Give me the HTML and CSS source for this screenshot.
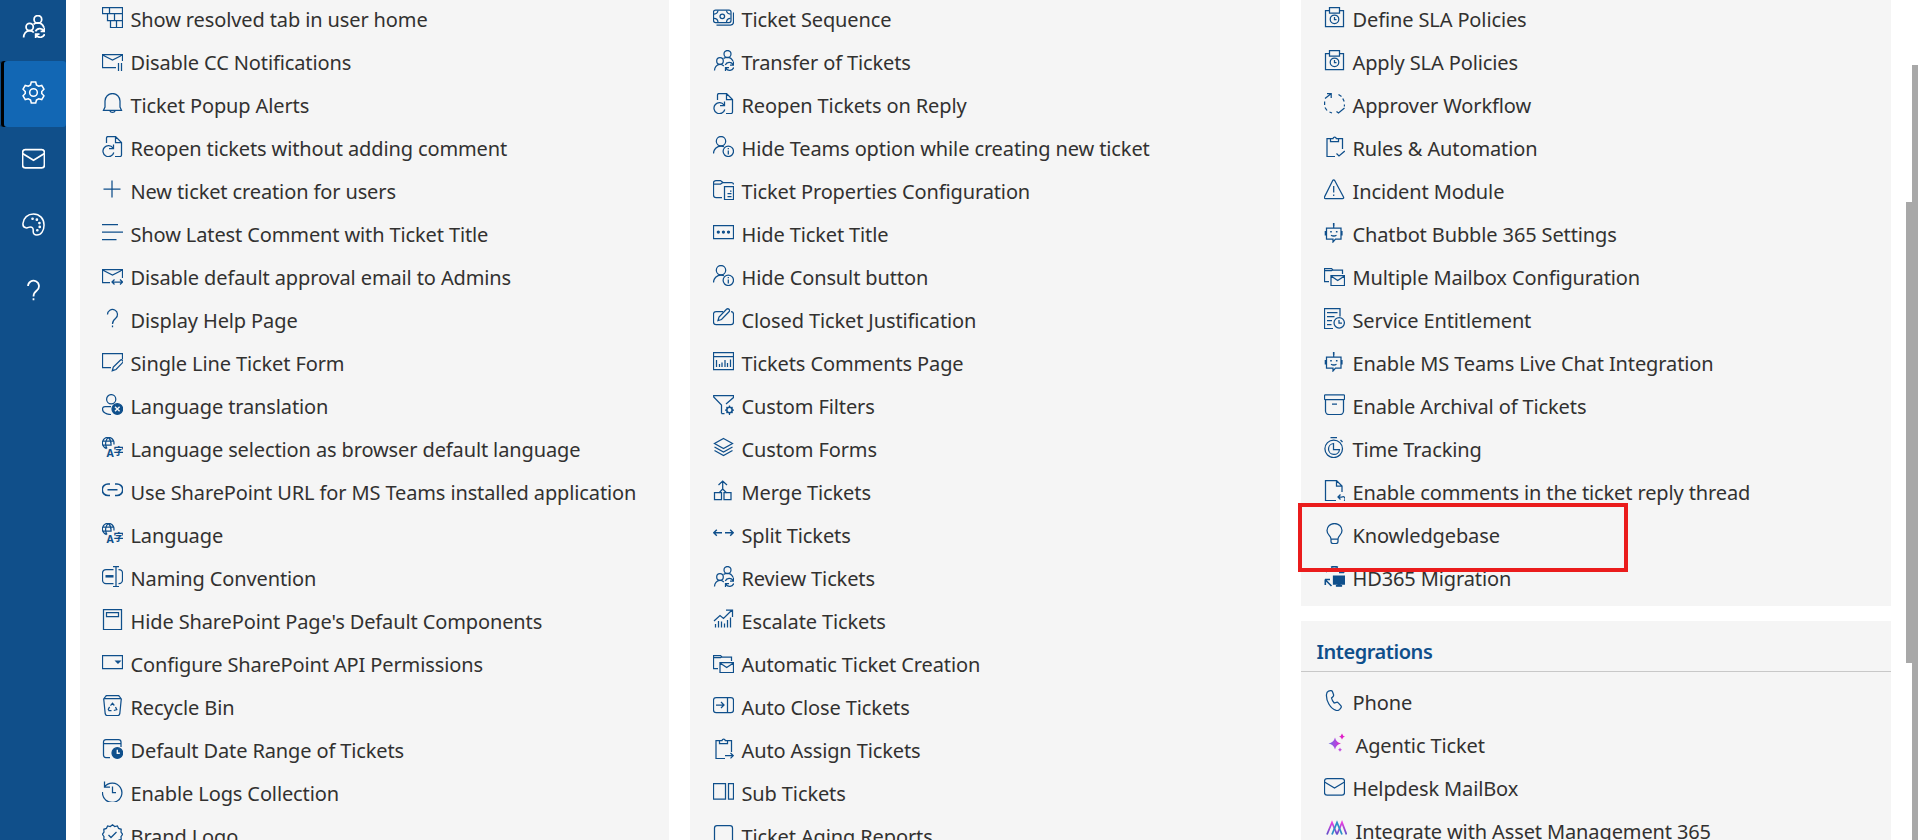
FILE: index.html
```html
<!DOCTYPE html>
<html lang="en">
<head>
<meta charset="utf-8">
<title>Settings</title>
<link rel="stylesheet" href="styles.css">
</head>
<body>
<svg class="sprite" aria-hidden="true">
<defs>
<linearGradient id="g-ai" x1="0" x2="1" y1="0" y2="0"><stop offset="0" stop-color="#6a6be0"/><stop offset=".6" stop-color="#b046e0"/><stop offset="1" stop-color="#e81ec0"/></linearGradient>
<linearGradient id="g-am" x1="0" x2="0" y1="0" y2="1"><stop offset="0" stop-color="#ea3fe0"/><stop offset="1" stop-color="#5b50c8"/></linearGradient>
</defs>
<symbol id="bricks" viewBox="0 0 21 21"><path d="M.5 .5h20v20h-12v-7h-3v-7h-5zM.5 6.5h20M5.500 13.500h15M7.500 .5v6M12.500 6.500v7M14.500 13.500v7"/></symbol>
<symbol id="mailpause" viewBox="0 0 21 21"><path d="M14 17.500H.5v-13h20V11M.5 5l10 5 10-5M16.500 13v8M19.500 13v8"/></symbol>
<symbol id="bell" viewBox="0 0 21 21"><path d="M1.500 17.300L3 14V8a7.500 7.500 0 0 1 15 0v6l1.500 3.300zM7.700 17.500a3 3 0 0 0 5.600 0"/></symbol>
<symbol id="reopen" viewBox="0 0 21 21"><path d="M4.500 7V2a1.500 1.500 0 0 1 1.500-1.500h7.500l6 6V19a1.500 1.500 0 0 1-1.500 1.500h-5M13.500 .5v6h6M11 12a5.500 5.500 0 1 0 .8 4.500M11.500 8.500v4h-4.500"/></symbol>
<symbol id="plus" viewBox="0 0 21 21"><path d="M1.500 10h17M10 1.500v17"/></symbol>
<symbol id="lines" viewBox="0 0 21 21"><path d="M0 2.500h16M0 10h21M0 17.500h14.500"/></symbol>
<symbol id="mailarrows" viewBox="0 0 21 21"><path d="M8 17.500H.5v-13h20V13M.5 5l10 5 10-5M10 17h10.500M12.500 14.500L10 17l2.500 2.500M18 14.500l2.500 2.500-2.500 2.500"/></symbol>
<symbol id="help" viewBox="0 0 21 21"><path d="M5.500 6.500a5 5 0 1 1 8 4c-2 1.500-3 2.500-3 5.500M10.500 17.500v1.800"/></symbol>
<symbol id="formpen" viewBox="0 0 21 21"><path d="M9 16.500H.5v-14h20V8M10.300 19.700l1-3.700 7-6.700a1.600 1.600 0 0 1 2.300 2.300L14 18.500z"/></symbol>
<symbol id="userx" viewBox="0 0 21 21"><circle cx="9.200" cy="5.200" r="4.600"/><path d="M9 12.500H3A2.500 2.500 0 0 0 .5 15c0 3.500 4 5.500 8.500 5.500"/><circle class="solid" cx="15.300" cy="15" r="5.300"/><path class="knock" d="M13 12.700l4.600 4.600M17.600 12.700L13 17.300"/></symbol>
<symbol id="lang" viewBox="0 0 21 21"><path d="M11.800 7.500A5.800 5.800 0 1 0 4.500 11.600M6.200 .5C3 3 3 8.500 5 11.500M6.200 .5c2.300 1.700 3 4 2.800 7M1 4h10.500M.7 8h9"/><text x="4.500" y="19.800" font-size="10.500" font-weight="bold" class="glyph">A</text><text x="11.500" y="17.500" font-size="10.500" class="glyph cjk">字</text></symbol>
<symbol id="link" viewBox="0 0 21 21"><path class="w15" d="M8 4H6a5.300 5.300 0 0 0 0 11.500h2M13 4h2a5.300 5.300 0 0 1 0 11.500h-2M5.500 9.700h10"/></symbol>
<symbol id="rename" viewBox="0 0 21 21"><path d="M11.500 3.500H4a3.500 3.500 0 0 0-3.500 3.500v7a3.500 3.500 0 0 0 3.500 3.500h7.500M16.500 3.500h.5a3.500 3.500 0 0 1 3.500 3.500v7a3.500 3.500 0 0 1-3.500 3.500h-.5M14 .5v20M11 .5h6M11 20.500h6"/><path class="w25" d="M3.500 10.300h8"/></symbol>
<symbol id="pagehead" viewBox="0 0 21 21"><path d="M1.500 .5h18v20h-18zM4.500 3.500h12v4h-12z"/></symbol>
<symbol id="dropdown" viewBox="0 0 21 21"><path d="M.5 3.500h20v13H.5z"/><path class="solid" d="M14 9.200h4l-2 2z"/></symbol>
<symbol id="recycle" viewBox="0 0 21 21"><path d="M2 3.700L3.500 1.500Q4 .5 5 .5h11q1 0 1.500 1L19 3.700zM1.700 3.700l1.500 15q.3 1.800 2 1.800h10.600q1.700 0 2-1.800l1.500-15M8.500 10.700l2-2.500 1.800 2.300M13.500 12l1.300 2.700-3 .8M9.500 15.500H7l-.7-1.300 1.300-2.300"/></symbol>
<symbol id="calclock" viewBox="0 0 21 21"><path d="M8 19.500H4A2.500 2.500 0 0 1 1.500 17V4A2.500 2.500 0 0 1 4 1.500h12.500A2.500 2.500 0 0 1 19 4v5M1.500 5.500H19"/><circle class="solid" cx="15.300" cy="15" r="5.300"/><path class="knock" d="M15.300 11.700v3.500h2.500"/></symbol>
<symbol id="history" viewBox="0 0 21 21"><path d="M2.500 5.800a9.700 9.700 0 1 1-2 5.200M2.500 .5v5.500H8M10.500 5.500v6H14"/></symbol>
<symbol id="badge" viewBox="0 0 21 21"><path d="M10.500 .8l2.200 1.700 2.700-.6 1.200 2.500 2.600.9-.2 2.800 1.600 2.200-1.600 2.300.2 2.700-2.600 1-1.200 2.400-2.700-.5-2.200 1.700-2.200-1.700-2.700.5-1.200-2.400-2.600-1 .2-2.700L.4 10.300 2 8.100l-.2-2.800 2.600-.9 1.200-2.500 2.700.6zM6.500 11l2.500 2.500 5.500-5.500"/></symbol>
<symbol id="money" viewBox="0 0 21 21"><rect x=".5" y="3" width="17.500" height="12.500" rx="2"/><circle cx="9.300" cy="9.300" r="2.300"/><path d="M5 3.500a4 4 0 0 1-4 3.500M13.500 3.500a4 4 0 0 0 4 3.500M1 11.500a4 4 0 0 1 4 3.500M17.500 11.500a4 4 0 0 0-4 3.500M20.500 5.500V15q0 3-3 3H3.500"/></symbol>
<symbol id="people" viewBox="0 0 21 21"><circle cx="14.500" cy="4" r="3.500"/><circle cx="7" cy="11" r="3.300"/><path d="M1.500 20.500c0-3 2-6.200 5.500-6.200 1.800 0 3 .8 3.800 1.700M10.500 8.500c1-.8 2.500-1.200 4-1.200 2.700 0 4.500 1.500 5.500 4M12.300 15a4.300 4.300 0 0 1 7.700-.5M20.500 11.500v3.500H17M20.700 17.500a4.300 4.300 0 0 1-7.700 .8M12.500 21v-3.500H16"/></symbol>
<symbol id="userinfo" viewBox="0 0 21 21"><circle cx="8" cy="5.200" r="4.700"/><path d="M.5 17.500C.5 13.500 3.800 10 8 10q1.500 0 3 .7"/><circle cx="15.300" cy="15.300" r="5.200"/><path d="M15.300 14.500v4M15.300 12v1.300"/></symbol>
<symbol id="folderdoc" viewBox="0 0 21 21"><path d="M9 18.500H3A2.500 2.500 0 0 1 .5 16V4A2.500 2.500 0 0 1 3 1.500h4.500l2.500 2h8.500q2 0 2 2M.5 5h7l2.500-1.500M11.500 7.500h9v13h-9zM17 12h1.500M14.500 14.500h4M14.500 17.500h4"/></symbol>
<symbol id="dots" viewBox="0 0 21 21"><path d="M.5 3.500h20v13H.5z"/><circle class="solid" cx="5.300" cy="10" r="1"/><circle class="solid" cx="10.400" cy="10" r="1"/><circle class="solid" cx="15.500" cy="10" r="1"/></symbol>
<symbol id="compose" viewBox="0 0 21 21"><path d="M10 3.500H3A2.500 2.500 0 0 0 .5 6v8A2.500 2.500 0 0 0 3 16.500h15a2.500 2.500 0 0 0 2.500-2.500V6A2.500 2.500 0 0 0 18 3.500M5 12.500l1-3.500 7.500-7.700a1.700 1.700 0 0 1 2.500 2.500L8.500 11.500z"/></symbol>
<symbol id="chartpage" viewBox="0 0 21 21"><path d="M.5 1.500h20v17H.5zM.5 5.500h20M3.500 9v7M6.500 13v3M9 11.500v4.500M12 9v7M14.500 12v4M17.500 8.500v7.500"/></symbol>
<symbol id="filter" viewBox="0 0 21 21"><path d="M8.500 19.500V11L.7 3V1.500h19.800v2L13 10M8.500 19.500h3"/><circle class="w15" cx="16.500" cy="16" r="2.700"/><path d="M16.500 11.500v1.500M16.500 19v2M12 16h1.500M19.500 16H21M13.500 13l1 1M18.500 18l1 1M13.500 19l1-1M18.500 14l1-1"/></symbol>
<symbol id="layers" viewBox="0 0 21 21"><path d="M10.500 1.500L19.500 6.500l-9 5-9-5zM1.500 10l9 5 9-5M1.500 13.500l9 5 9-5"/></symbol>
<symbol id="merge" viewBox="0 0 21 21"><path d="M9.700 1v8L6 13M9.700 9l4 4M5.500 5l4.200-4L14 5M1.500 12.500h7v7h-7zM11 12.500h7v7h-7z"/></symbol>
<symbol id="split" viewBox="0 0 21 21"><path class="w12" d="M.8 9.700H9M3.800 6.700l-3 3 3 3M12 9.700h8.200M17.200 6.700l3 3-3 3"/></symbol>
<symbol id="trend" viewBox="0 0 21 21"><path d="M1 12l6-5.500 3.500 3L19 1M13 1.200h6.500V8M2.500 18.500V15M5.500 18.500V12M8.500 18.500V12.500M11.500 18.500V14.500M14.500 18.500V11M17.500 18.500V8.500"/></symbol>
<symbol id="foldermail" viewBox="0 0 21 21"><path d="M5 16.500H.5v-13h7l1.500 1.500h9.500V9M.5 5.500h7L9 5M7 10.500h13.500v10H7zM7 11l6.700 4.500 6.800-4.500"/></symbol>
<symbol id="panelin" viewBox="0 0 21 21"><rect x=".5" y="2.500" width="20" height="15" rx="2.500"/><path d="M14.500 2.500v15M3 10h8M8 7l3 3-3 3"/></symbol>
<symbol id="clipnext" viewBox="0 0 21 21"><path d="M12 20.500H3v-18h3.500M14 2.500h4.500V14M6.500 5.500v-3H9a1.700 1.700 0 0 1 3.300 0h2.200v3zM12 17.700h8M17.500 15l2.700 2.700-2.700 2.700"/></symbol>
<symbol id="split2" viewBox="0 0 21 21"><path d="M.5 2.500h12v15.500H.5zM15.500 2.500h5v15.500h-5z"/></symbol>
<symbol id="sheet" viewBox="0 0 21 21"><rect x="1.500" y="1.500" width="18" height="19" rx="2.500"/></symbol>
<symbol id="sla" viewBox="0 0 21 21"><path d="M5 3.500H1.500v16h18v-16H16M5.500 .5h10v5.500h-10z"/><circle cx="10.500" cy="12.300" r="4.300"/><path d="M10.500 10v2.500h2"/></symbol>
<symbol id="cycle" viewBox="0 0 21 21"><path d="M1 5.500L7 .7M3 .7h4.200V5M.6 8.500v3.500M1 14.500l2 3M5.500 19l2.500 1M14.500 1.500l3 2M18.800 5.500l1.400 3M20.400 11.500v2M12.500 18.500l2 1.500 6-5"/></symbol>
<symbol id="clipcheck" viewBox="0 0 21 21"><path d="M11 20.500H3v-18h3.500M14 2.500h4.500V13M6.500 5.500v-3H9a1.700 1.700 0 0 1 3.300 0h2.200v3zM12.500 17.500l2.500 2.500 5.800-5"/></symbol>
<symbol id="warn" viewBox="0 0 21 21"><path d="M8.700 1.500q1-1.300 2 0l8.800 16.500q.6 1.500-1 1.500H1.500q-1.600 0-1-1.500zM9.700 7v6.500M9.700 15.500v1.500"/></symbol>
<symbol id="bot" viewBox="0 0 21 21"><path d="M9.700 3v2.500M2.500 6h14.500v11h-5.500l-2.500 3v-3H2.500zM7 13.200q2.800 1.600 5.500 0"/><path class="w15" d="M9.700 1v2.500M1.500 9v4.500M17.800 9v4.500M7 9v1.500M12.700 9v1.500"/></symbol>
<symbol id="docclock" viewBox="0 0 21 21"><path d="M9 20.500H.5V.5h15.500v8M3 4.500h10.500M3 8.500h7.500M3 12.500h5M3 16.500h4.500"/><circle cx="15.200" cy="14.800" r="5.200"/><path d="M15 12v3h3"/></symbol>
<symbol id="archive" viewBox="0 0 21 21"><rect x=".5" y=".8" width="20" height="4.700" rx=".8"/><path d="M1.500 5.500V17A3.500 3.500 0 0 0 5 20.500h11a3.500 3.500 0 0 0 3.500-3.500V5.500M8 10h5"/></symbol>
<symbol id="timer" viewBox="0 0 21 21"><circle cx="9.700" cy="11.800" r="8.800"/><path d="M6.500 .7h6.500M16.500 3l2 2M9.500 6.500a5.500 5.500 0 1 0 6 6h-6z"/></symbol>
<symbol id="docreply" viewBox="0 0 21 21"><path d="M12 20.500H1.500V.5h11l5.500 5.500v6M12.500 .5V6H18M14 17h4a2 2 0 0 1 2 3.700M16.500 14.500L14 17l2.500 2.500"/></symbol>
<symbol id="bulb" viewBox="0 0 21 21"><path d="M7 16C7 12.500 3 12 3 7.500a7.500 7 0 0 1 15 0C18 12 14 12.500 14 16zM7 16v2.500q0 2 2 2h3q2 0 2-2V16"/></symbol>
<symbol id="migrate" viewBox="0 0 21 21"><path class="w15" d="M7 1.200Q10 0 14 1.200M2 6l1.500-1.500M15 6.500h5M20 6.500v-2.500M1 13.500h5M1.300 13.500V19M1.500 14l6 6"/><path class="solid" d="M9.500 10h11v8h-11zM12.500 19.500h5v.7h-5zM14 18h2v2h-2z"/></symbol>
<symbol id="phone" viewBox="0 0 21 21"><path d="M4.500 1.200L6.500 .7q1.500-.3 2 1l1 2.800q.4 1.300-.6 2.200L7.500 8q.5 2.500 2.700 5l2.300-.7q1.100-.3 1.800.6l2.700 3q.7 1-.1 2l-1.200 1.500q-1.400 1.500-3.500 1C6 18.500 2 10.500 2.500 4.500q.1-2.600 2-3.300z"/></symbol>
<symbol id="mail" viewBox="0 0 21 21"><rect x=".5" y="2.500" width="20" height="16.500" rx="2.500"/><path d="M.5 6l10 6 10-6"/></symbol>
<symbol id="sparkle" viewBox="0 0 21 21"><g fill="url(#g-ai)" stroke="none"><path d="M9 4.500q1.200 5 6 6-4.800 1-6 6-1.200-5-6.500-6 5.300-1 6.500-6z"/><path d="M16 .5q.7 2.500 3 3-2.300.5-3 3-.7-2.500-3-3 2.300-.5 3-3z" fill="#e020c8"/><path d="M14 14.500q.5 1.700 2 2.200-1.500.4-2 2-.5-1.600-2-2 1.500-.5 2-2.200z" fill="#c24ae0"/></g></symbol>
<symbol id="asset" viewBox="0 0 21 21"><g fill="none" stroke-width="1.800"><path stroke="url(#g-am)" d="M1 15.500L6 3.500l5 12M11 15.500l5-12 4.500 12"/><path stroke="#2c8fc8" d="M6 15.500l5-12 5 12"/></g></symbol>
<symbol id="gear" viewBox="0 0 24 24"><circle cx="12" cy="12" r="4"/><path d="M9.700 1h4.600l.8 3.200 2.300 1.300 3.200-.9 2.300 4-2.300 2.300v2.200l2.300 2.300-2.300 4-3.200-.9-2.300 1.300-.8 3.200H9.700l-.8-3.200-2.300-1.300-3.200.9-2.300-4 2.300-2.300v-2.200L1.100 8.600l2.300-4 3.200.9 2.300-1.300z"/></symbol>
<symbol id="palette" viewBox="0 0 24 24"><path d="M1 11C1.500 5 6 1 12 1c6.500 0 11 5 11 11.500C23 18.500 20 23 15.500 23c-2.500 0-4-1.500-3.800-4.200.2-3-.9-4.300-3.200-4.300-1.500 0-2.500 1.500-4.500 1-2.200-.5-3.200-2-3-4.500z"/><g class="solid"><circle cx="11" cy="6" r=".6"/><circle cx="15.500" cy="7" r=".6"/><circle cx="18.200" cy="10.500" r=".6"/><circle cx="18.500" cy="14.500" r=".6"/><circle cx="16" cy="18" r=".6"/></g></symbol>
</svg>

<div class="app">
<nav class="rail">
<a class="rail-item"><svg><use href="#people"/></svg></a>
<a class="rail-item active"><svg><use href="#gear"/></svg></a>
<a class="rail-item"><svg><use href="#mail"/></svg></a>
<a class="rail-item"><svg><use href="#palette"/></svg></a>
<a class="rail-item"><svg><use href="#help"/></svg></a>
</nav>

<main class="columns">
<section class="card first">
<ul class="list">
<li><svg><use href="#bricks"/></svg><span>Show resolved tab in user home</span></li>
<li><svg><use href="#mailpause"/></svg><span>Disable CC Notifications</span></li>
<li><svg><use href="#bell"/></svg><span>Ticket Popup Alerts</span></li>
<li><svg><use href="#reopen"/></svg><span>Reopen tickets without adding comment</span></li>
<li><svg><use href="#plus"/></svg><span>New ticket creation for users</span></li>
<li><svg><use href="#lines"/></svg><span>Show Latest Comment with Ticket Title</span></li>
<li><svg><use href="#mailarrows"/></svg><span>Disable default approval email to Admins</span></li>
<li><svg><use href="#help"/></svg><span>Display Help Page</span></li>
<li><svg><use href="#formpen"/></svg><span>Single Line Ticket Form</span></li>
<li><svg><use href="#userx"/></svg><span>Language translation</span></li>
<li><svg><use href="#lang"/></svg><span>Language selection as browser default language</span></li>
<li><svg><use href="#link"/></svg><span>Use SharePoint URL for MS Teams installed application</span></li>
<li><svg><use href="#lang"/></svg><span>Language</span></li>
<li><svg><use href="#rename"/></svg><span>Naming Convention</span></li>
<li><svg><use href="#pagehead"/></svg><span>Hide SharePoint Page's Default Components</span></li>
<li><svg><use href="#dropdown"/></svg><span>Configure SharePoint API Permissions</span></li>
<li><svg><use href="#recycle"/></svg><span>Recycle Bin</span></li>
<li><svg><use href="#calclock"/></svg><span>Default Date Range of Tickets</span></li>
<li><svg><use href="#history"/></svg><span>Enable Logs Collection</span></li>
<li><svg><use href="#badge"/></svg><span>Brand Logo</span></li>
</ul>
</section>

<section class="card">
<ul class="list">
<li><svg><use href="#money"/></svg><span>Ticket Sequence</span></li>
<li><svg><use href="#people"/></svg><span>Transfer of Tickets</span></li>
<li><svg><use href="#reopen"/></svg><span>Reopen Tickets on Reply</span></li>
<li><svg><use href="#userinfo"/></svg><span>Hide Teams option while creating new ticket</span></li>
<li><svg><use href="#folderdoc"/></svg><span>Ticket Properties Configuration</span></li>
<li><svg><use href="#dots"/></svg><span>Hide Ticket Title</span></li>
<li><svg><use href="#userinfo"/></svg><span>Hide Consult button</span></li>
<li><svg><use href="#compose"/></svg><span>Closed Ticket Justification</span></li>
<li><svg><use href="#chartpage"/></svg><span>Tickets Comments Page</span></li>
<li><svg><use href="#filter"/></svg><span>Custom Filters</span></li>
<li><svg><use href="#layers"/></svg><span>Custom Forms</span></li>
<li><svg><use href="#merge"/></svg><span>Merge Tickets</span></li>
<li><svg><use href="#split"/></svg><span>Split Tickets</span></li>
<li><svg><use href="#people"/></svg><span>Review Tickets</span></li>
<li><svg><use href="#trend"/></svg><span>Escalate Tickets</span></li>
<li><svg><use href="#foldermail"/></svg><span>Automatic Ticket Creation</span></li>
<li><svg><use href="#panelin"/></svg><span>Auto Close Tickets</span></li>
<li><svg><use href="#clipnext"/></svg><span>Auto Assign Tickets</span></li>
<li><svg><use href="#split2"/></svg><span>Sub Tickets</span></li>
<li><svg><use href="#sheet"/></svg><span>Ticket Aging Reports</span></li>
</ul>
</section>

<div class="stack">
<section class="card">
<ul class="list">
<li><svg><use href="#sla"/></svg><span>Define SLA Policies</span></li>
<li><svg><use href="#sla"/></svg><span>Apply SLA Policies</span></li>
<li><svg><use href="#cycle"/></svg><span>Approver Workflow</span></li>
<li><svg><use href="#clipcheck"/></svg><span>Rules &amp; Automation</span></li>
<li><svg><use href="#warn"/></svg><span>Incident Module</span></li>
<li><svg><use href="#bot"/></svg><span>Chatbot Bubble 365 Settings</span></li>
<li><svg><use href="#foldermail"/></svg><span>Multiple Mailbox Configuration</span></li>
<li><svg><use href="#docclock"/></svg><span>Service Entitlement</span></li>
<li><svg><use href="#bot"/></svg><span>Enable MS Teams Live Chat Integration</span></li>
<li><svg><use href="#archive"/></svg><span>Enable Archival of Tickets</span></li>
<li><svg><use href="#timer"/></svg><span>Time Tracking</span></li>
<li><svg><use href="#docreply"/></svg><span>Enable comments in the ticket reply thread</span></li>
<li class="marked"><svg><use href="#bulb"/></svg><span>Knowledgebase</span></li>
<li><svg><use href="#migrate"/></svg><span>HD365 Migration</span></li>
</ul>
</section>
<section class="card integrations">
<h2>Integrations</h2>
<ul class="list">
<li><svg><use href="#phone"/></svg><span>Phone</span></li>
<li class="wide"><svg><use href="#sparkle"/></svg><span>Agentic Ticket</span></li>
<li><svg><use href="#mail"/></svg><span>Helpdesk MailBox</span></li>
<li class="wide"><svg><use href="#asset"/></svg><span>Integrate with Asset Management 365</span></li>
</ul>
</section>
</div>
</main>

<div class="track inner"><i></i></div>
<div class="track outer"><i></i></div>
</div>
</body>
</html>
```
FILE: styles.css
```css
*, *::after { box-sizing: border-box; }
html, body { margin: 0; height: 100%; overflow: hidden; }
body {
  background: #fff;
  color: #323130;
  font: 20px/27px "Noto Sans", "Segoe UI", sans-serif;
}
.sprite { position: absolute; width: 0; height: 0; }
svg { fill: none; stroke: currentColor; stroke-width: 1.25; overflow: visible; }
.solid { fill: currentColor; }
.knock { stroke: #f5f5f5; stroke-width: 1.4; }
.glyph { fill: currentColor; stroke: none; font-family: "Noto Sans", sans-serif; }
.cjk { font-family: "Noto Sans CJK SC", sans-serif; font-weight: bold; }
.w12 { stroke-width: 1.4; }
.w15 { stroke-width: 1.6; }
.w25 { stroke-width: 2.5; }

.app { display: flex; height: 840px; overflow: hidden; }

.rail { flex: none; width: 66px; background: #104f8a; color: #fff; overflow: hidden; }
.rail-item { display: flex; align-items: center; justify-content: center; height: 66px; padding-bottom: 3px; border-radius: 3px; }
.rail-item:first-child { margin-top: -5px; }
.rail-item.active { background: #1267b4; box-shadow: inset 1px 0 #104f8a, inset 4px 0 #000; }
.rail-item svg { width: 23px; height: 23px; stroke-width: 1.6; }

.columns {
  flex: none;
  display: grid;
  grid-template-columns: 589px 590px 590px;
  gap: 21px;
  margin-left: 14px;
  width: 1811px;
  height: 840px;
}
.card { background: #f5f5f5; }
.stack { display: flex; flex-direction: column; gap: 15px; }
.stack .card:first-child { height: 606px; }
.integrations { flex: 1; }

.list { list-style: none; margin: 0; padding: 3px 0 0 23px; }
.first .list { padding-left: 22px; }
.list li { display: flex; align-items: flex-start; height: 43px; padding-top: 4px; position: relative; }
.list svg { flex: none; width: 21px; height: 21px; color: #0f4f8b; }
.list span { margin-left: 7.5px; margin-top: -1px; white-space: nowrap; letter-spacing: -0.12px; }
.list .wide span { margin-left: 10.5px; }
.list .wide svg { position: relative; left: 2px; }

.marked::after {
  content: "";
  position: absolute;
  z-index: 2;
  left: -26px;
  top: -16px;
  width: 330px;
  height: 69px;
  border: 4px solid #ea1c1c;
}

h2 {
  margin: 0;
  height: 51px;
  padding: 17px 0 0 15.5px;
  border-bottom: 1px solid #c8c8c8;
  color: #0f4f8b;
  font-size: 20px;
  font-weight: 600;
  line-height: 27px;
  letter-spacing: -0.45px;
}
.integrations .list { padding-top: 14px; }

.track { flex: none; width: 6px; height: 840px; }
.inner { margin-left: 15px; padding-top: 202px; }
.outer { padding-top: 65px; }
.track i { display: block; background: #a8a8a8; height: 461px; }
.outer i { height: 775px; }
```
